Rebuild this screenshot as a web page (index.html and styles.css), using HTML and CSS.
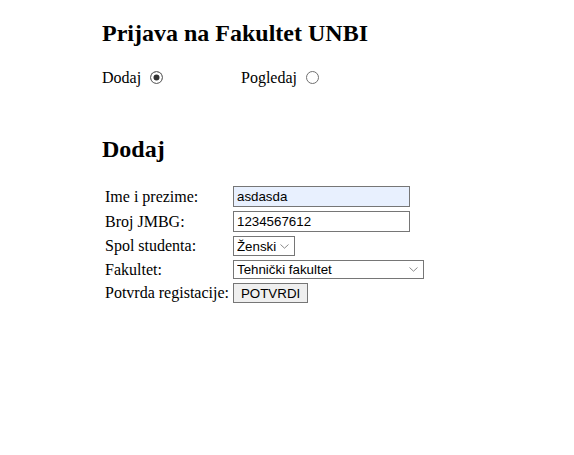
FILE: index.html
```html
<!DOCTYPE html>
<html>
<head>
<meta charset="utf-8">
<link rel="stylesheet" href="styles.css">
</head>
<body>
<div class="wrap">
  <h2 class="title">Prijava na Fakultet UNBI</h2>
  <div class="choice">
    <label class="opt">Dodaj <input type="radio" class="radio" name="m" checked></label>
    <label class="opt">Pogledaj <input type="radio" class="radio" name="m"></label>
  </div>
  <h2 class="sub">Dodaj</h2>
  <table class="form">
    <tr><td>Ime i prezime:</td><td><input type="text" class="field filled" value="asdasda"></td></tr>
    <tr><td>Broj JMBG:</td><td><input type="text" class="field" value="1234567612"></td></tr>
    <tr><td>Spol studenta:</td><td><span class="selwrap"><select class="sel small"><option>Ženski</option><option>Muški</option></select><svg class="chev" width="9" height="5" viewBox="0 0 9 5"><path d="M0.5 0.5 L4.5 4.2 L8.5 0.5" fill="none" stroke="#8a8a8a" stroke-width="1"/></svg></span></td></tr>
    <tr><td>Fakultet:</td><td><span class="selwrap"><select class="sel wide"><option>Tehnički fakultet</option><option>Ekonomski fakultet</option></select><svg class="chev" width="9" height="5" viewBox="0 0 9 5"><path d="M0.5 0.5 L4.5 4.2 L8.5 0.5" fill="none" stroke="#8a8a8a" stroke-width="1"/></svg></span></td></tr>
    <tr><td>Potvrda registacije:</td><td><button type="button" class="btn">POTVRDI</button></td></tr>
  </table>
</div>
</body>
</html>
```
FILE: styles.css
```css
body {
  margin: 8px;
  font-family: "Liberation Serif", "Times New Roman", serif;
  font-size: 16px;
  color: #000;
  background: #fff;
}
.wrap {
  margin-left: 94px;
}
.title {
  font-size: 24px;
  margin: 12px 0 22px;
}
.choice {
  display: flex;
}
.opt {
  width: 139px;
}
.radio {
  appearance: none;
  -webkit-appearance: none;
  width: 13px;
  height: 13px;
  margin: 0 0 0 5px;
  border: 1px solid #707070;
  border-radius: 50%;
  background: #fff;
  vertical-align: -1px;
  box-sizing: border-box;
}
.radio:checked {
  background: #333;
  box-shadow: inset 0 0 0 2.5px #fff;
}
.sub {
  font-size: 24px;
  margin: 49px 0 20px;
}
.form {
  border-spacing: 2px;
}
.form td {
  padding: 1px;
}
.field {
  font-family: "Liberation Sans", Arial, sans-serif;
  font-size: 13.33px;
  width: 177px;
  height: 21px;
  box-sizing: border-box;
  border: 1px solid #767676;
  padding: 1px 3px;
  margin: 0;
  display: block;
}
.filled {
  background: #e8f0fe;
}
.selwrap {
  position: relative;
  display: block;
  width: fit-content;
}
.sel {
  appearance: none;
  -webkit-appearance: none;
  font-family: "Liberation Sans", Arial, sans-serif;
  font-size: 13.33px;
  color: #000;
  background: #fff;
  border: 1px solid #767676;
  border-radius: 0;
  height: 20px;
  padding: 0 16px 0 3px;
  margin: 0;
  display: block;
  box-sizing: border-box;
}
.small {
  width: 62px;
}
.wide {
  width: 191px;
  height: 19px;
}
.chev {
  position: absolute;
  right: 6px;
  top: 8px;
  pointer-events: none;
}
.wide + .chev {
  top: 7px;
}
.btn {
  font-family: "Liberation Sans", Arial, sans-serif;
  font-size: 13.33px;
  color: #000;
  border: 1px solid #767676;
  border-radius: 0;
  background: #efefef;
  height: 20px;
  padding: 0 7px;
  margin: 0;
  display: block;
}
```
